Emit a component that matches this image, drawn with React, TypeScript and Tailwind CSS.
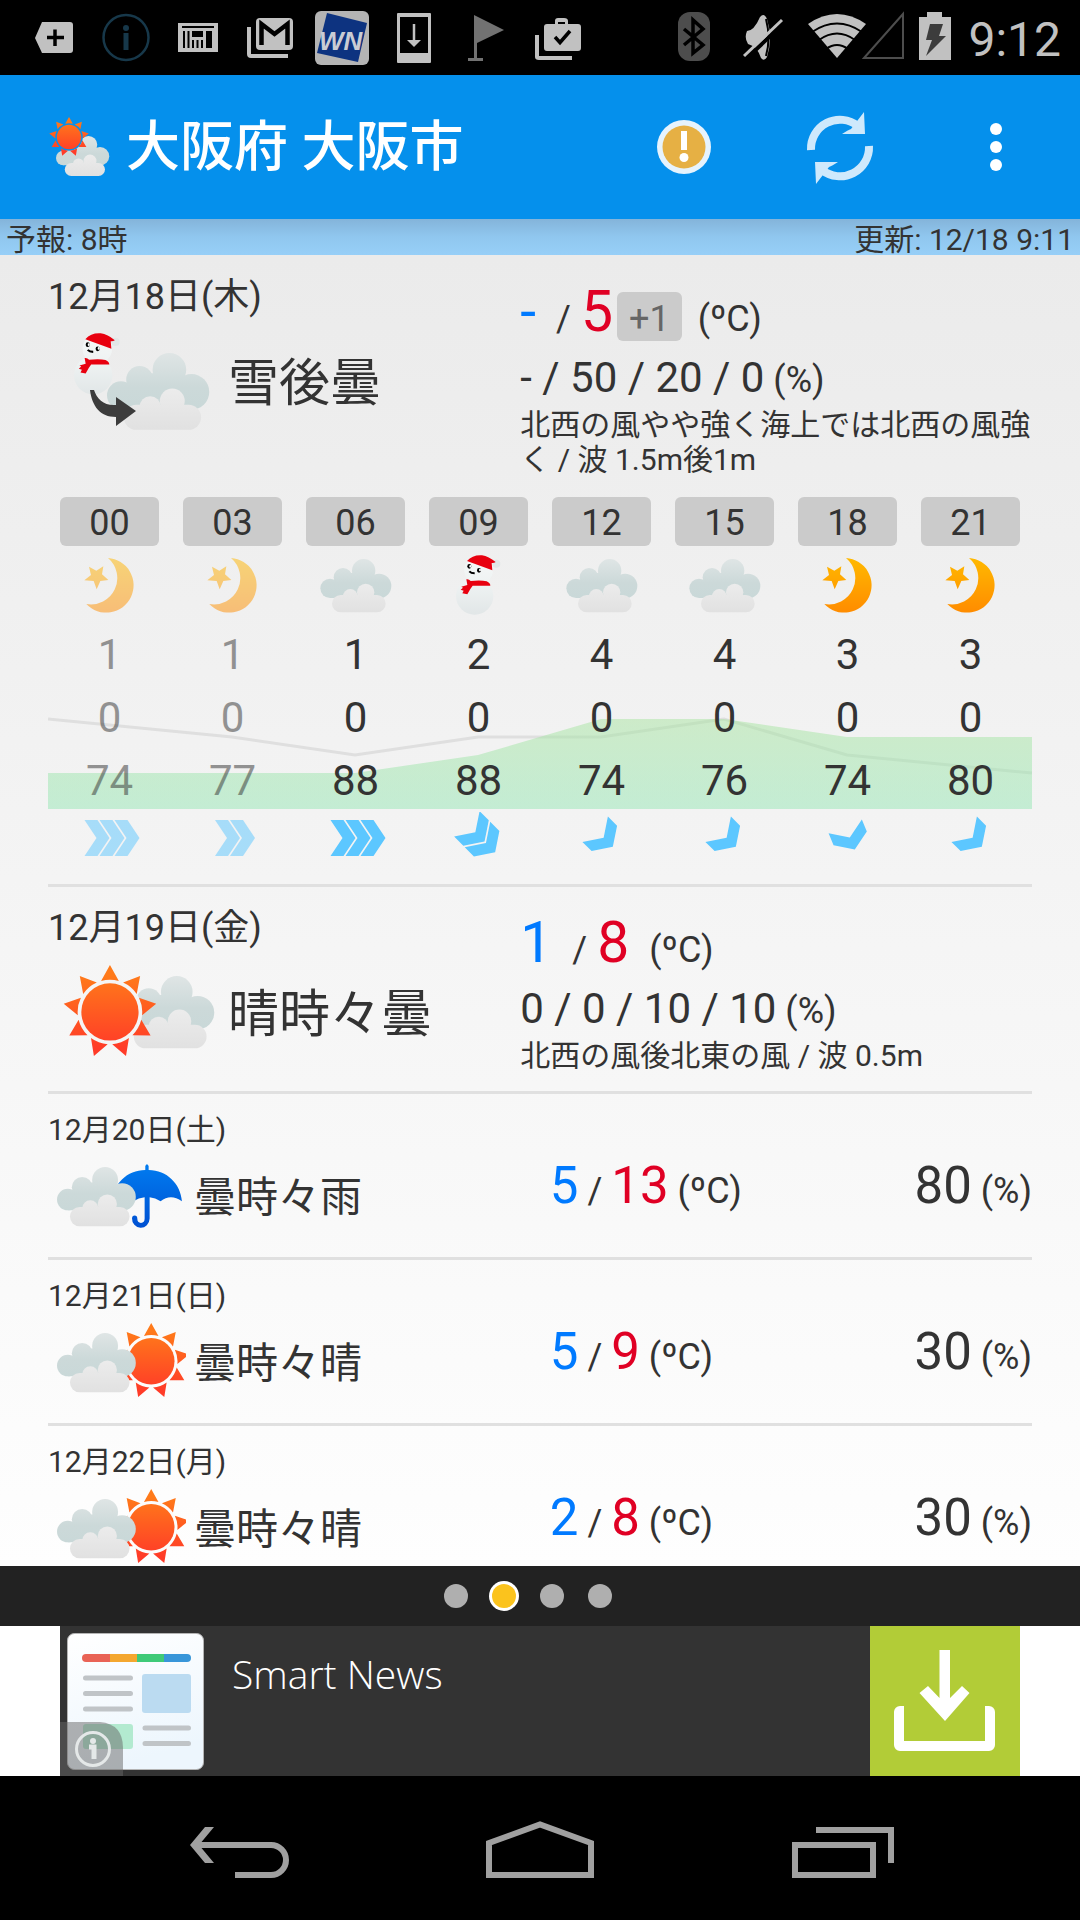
import type { ReactNode } from "react";

/* ---------- weather glyphs ---------- */

const CENTER = 141;
const point = (radius: number, degrees: number) => {
  const a = (degrees * Math.PI) / 180;
  return `${(CENTER + radius * Math.sin(a)).toFixed(1)} ${(CENTER - radius * Math.cos(a)).toFixed(1)}`;
};
const SUN_RAYS = Array.from({ length: 9 }, (_, i) => {
  const d = i * 40;
  return `M${point(141, d)}L${point(97, d + 16)}A96 96 0 0 0 ${point(97, d - 16)}Z`;
}).join("");

function Defs() {
  return (
    <svg className="absolute h-0 w-0" aria-hidden="true">
      <defs>
        <linearGradient id="sun" gradientUnits="userSpaceOnUse" x1="0" y1="30" x2="0" y2="250">
          <stop offset="0" stopColor="#ff7a1a" />
          <stop offset="1" stopColor="#ff3b28" />
        </linearGradient>
        <linearGradient id="cloudBack" gradientUnits="userSpaceOnUse" x1="0" y1="0" x2="0" y2="118">
          <stop offset="0" stopColor="#dfe5e5" />
          <stop offset="0.6" stopColor="#ccd9d9" />
          <stop offset="1" stopColor="#c9d8d8" />
        </linearGradient>
        <linearGradient id="cloudFront" gradientUnits="userSpaceOnUse" x1="0" y1="74" x2="0" y2="160">
          <stop offset="0" stopColor="#ececec" />
          <stop offset="1" stopColor="#e1e1e1" />
        </linearGradient>
        <linearGradient id="moon" gradientUnits="userSpaceOnUse" x1="0" y1="0" x2="0" y2="163">
          <stop offset="0" stopColor="#ffb900" />
          <stop offset="1" stopColor="#ff8c00" />
        </linearGradient>
        <linearGradient id="snow" gradientUnits="userSpaceOnUse" x1="0" y1="0" x2="0" y2="180">
          <stop offset="0" stopColor="#f6f8f8" />
          <stop offset="0.5" stopColor="#eef2f2" />
          <stop offset="1" stopColor="#e1e6e7" />
        </linearGradient>
        <linearGradient id="umbrella" gradientUnits="userSpaceOnUse" x1="0" y1="0" x2="0" y2="193">
          <stop offset="0" stopColor="#007cf0" />
          <stop offset="1" stopColor="#0050d2" />
        </linearGradient>
      </defs>
    </svg>
  );
}

/* 282 x 282 */
function SunShape({ halo }: { halo: string }) {
  return (
    <>
      <circle cx="141" cy="141" r="97" fill={halo} />
      <circle cx="141" cy="141" r="86" fill="url(#sun)" />
      <path d={SUN_RAYS} fill="url(#sun)" />
    </>
  );
}

/* 213 x 160 */
function CloudShape() {
  return (
    <>
      <g fill="url(#cloudBack)">
        <circle cx="29" cy="88" r="29" />
        <circle cx="68" cy="55" r="28" />
        <circle cx="130" cy="35" r="35" />
        <circle cx="176" cy="81" r="37" />
        <path d="M42 62H90V42H150V62H180V117H29V70Z" />
      </g>
      <g fill="url(#cloudFront)">
        <rect x="35" y="108" width="161" height="52" rx="26" />
        <circle cx="90" cy="112" r="22" />
        <circle cx="136" cy="100" r="26" />
        <path d="M60 112H170V130H60Z" />
      </g>
    </>
  );
}

/* 133 x 180 */
function SnowmanShape() {
  return (
    <>
      <g fill="url(#snow)">
        <circle cx="56" cy="123" r="56" />
        <circle cx="68" cy="46" r="43" />
      </g>
      <circle cx="121" cy="26" r="12" fill="#e2e7e7" />
      <path d="M33 18Q50-1 78 1Q98 4 119 21Q114 25 107 24L109 46Z" fill="#e8000f" />
      <path
        d="M31 73Q38 71 44 78Q74 74 92 79Q103 84 103 92L50 92L43 102L34 118L19 115L23 107L14 104L21 98L16 95L34 90Z"
        fill="#e8000f"
      />
      <ellipse cx="40" cy="34" rx="6" ry="7" fill="#000" />
      <ellipse cx="69" cy="46" rx="6" ry="7" fill="#000" />
      <ellipse cx="43" cy="34" rx="3" ry="4" fill="#fff" />
      <ellipse cx="72" cy="45" rx="3" ry="4" fill="#fff" />
      <path d="M40 49Q45 55 56 55" fill="none" stroke="#000" strokeWidth="6" />
    </>
  );
}

/* 154 x 163 */
function MoonShape() {
  return (
    <g fill="url(#moon)">
      <path d="M71 0A82 82 0 1 1 6 138A79 79 0 0 0 71 0Z" />
      <path d="M14 26L36 38L57 25L53 49L72 66L48 69L37 94L28 69L0 67L20 51Z" />
    </g>
  );
}

/* 210 x 193 */
function UmbrellaShape() {
  return (
    <g fill="url(#umbrella)">
      <path d="M100 18V6Q105-5 110 6V18C165 18 206 60 210 112Q176 88 146 112Q130 102 113 100V164A26 28 0 0 1 60 162Q61 155 68 155Q76 155 76 164A10 12 0 0 0 98 164V100Q80 102 64 112Q34 88 0 112C4 60 45 18 100 18Z" />
    </g>
  );
}

type IconName = "moon" | "cloud" | "snowman";

function HourIcon({ name }: { name: IconName }) {
  return (
    <svg viewBox="0 0 240 180" className="mx-auto h-[60px] w-20" role="img" aria-label={name}>
      {name === "moon" && (
        <g transform="translate(43 9)">
          <MoonShape />
        </g>
      )}
      {name === "cloud" && (
        <g transform="translate(13 12)">
          <CloudShape />
        </g>
      )}
      {name === "snowman" && (
        <g transform="translate(51 0)">
          <SnowmanShape />
        </g>
      )}
    </svg>
  );
}

function SnowThenCloud() {
  return (
    <svg viewBox="0 0 156 108" className="h-[108px] w-[156px]" aria-hidden="true">
      <g transform="translate(14 5) scale(.343)">
        <SnowmanShape />
      </g>
      <g transform="translate(47 25) scale(.48)">
        <CloudShape />
      </g>
      <path d="M30 62H34C37 71 44 78 56 77V69L76 83L56 98V89C40 89 32 78 30 62Z" fill="#3c3c3c" />
    </svg>
  );
}

function SunWithCloud() {
  return (
    <svg viewBox="0 0 156 108" className="h-[108px] w-[156px]" aria-hidden="true">
      <g transform="translate(58 17) scale(.452)">
        <CloudShape />
      </g>
      <g transform="translate(3 6) scale(.333)">
        <SunShape halo="#f5f5f5" />
      </g>
    </svg>
  );
}

function CloudWith({ other }: { other: "sun" | "umbrella" }) {
  return (
    <svg viewBox="0 0 132 84" className="h-[84px] w-[132px]" aria-hidden="true">
      {other === "sun" ? (
        <g transform="translate(59 3) scale(.271)">
          <SunShape halo="#fcfcfc" />
        </g>
      ) : (
        <g transform="translate(58 10) scale(.333)">
          <UmbrellaShape />
        </g>
      )}
      <g transform="translate(3 13) scale(.37)">
        <CloudShape />
      </g>
    </svg>
  );
}

function Wind({ count, angle = 0 }: { count: number; angle?: number }) {
  const width = 25 + (count - 1) * 15;
  return (
    <svg viewBox="-36 -26 72 52" className="mx-auto h-[52px] w-[76px]" role="img" aria-label="wind">
      <g transform={`translate(2 0) rotate(${angle})`} fill="#5cc7ff">
        {Array.from({ length: count }, (_, i) => (
          <path key={i} transform={`translate(${i * 15 - width / 2} -18)`} d="M0 0H13L25 18L13 36H0L12 18Z" />
        ))}
      </g>
    </svg>
  );
}

/* ---------- system bars ---------- */

function Notice({ children }: { children: ReactNode }) {
  return (
    <svg viewBox="0 0 72 75" className="h-[75px] w-[72px]" aria-hidden="true">
      {children}
    </svg>
  );
}

function StatusBar() {
  return (
    <div className="flex h-[75px] shrink-0 items-center bg-black pr-[19px] pl-[18px]">
      <Notice>
        <path d="M24 22H52Q55 22 55 25V50Q55 53 52 53H24L17 38Z" fill="#c1c1c1" />
        <path d="M37 29.500V46M29 37.500H46" stroke="#000" strokeWidth="3.500" />
      </Notice>
      <Notice>
        <circle cx="36" cy="37.500" r="22.500" fill="none" stroke="#17384a" strokeWidth="2.500" />
        <circle cx="36" cy="28" r="3" fill="#17384a" />
        <path d="M36 33V50" stroke="#17384a" strokeWidth="5" />
      </Notice>
      <Notice>
        <rect x="16" y="23" width="40" height="29" fill="#c1c1c1" />
        <path d="M20 27H52M22 31V48M26.500 31V48M31 40V48M35.500 40V48M40 40V48" stroke="#000" strokeWidth="2" />
        <path d="M30 31H41V37H30ZM44 31H50V48H44Z" fill="#000" />
      </Notice>
      <Notice>
        <path d="M15 27V54Q15 56 17 56H54" fill="none" stroke="#c1c1c1" strokeWidth="4" />
        <rect x="22" y="18" width="37" height="32" rx="4" fill="#c1c1c1" />
        <path d="M27.500 45V24L40.500 34L53.500 24V45" fill="none" stroke="#000" strokeWidth="4.500" />
      </Notice>
      <Notice>
        <rect x="9" y="11" width="54" height="54" rx="6" fill="#b4b4b4" />
        <path d="M21 13L61 23L52 62L11 53Z" fill="#0d3380" />
        <text x="13" y="50" fontFamily="Liberation Sans" fontSize="26" fontWeight="700" fontStyle="italic" fill="#c9ccd4">
          WN
        </text>
      </Notice>
      <Notice>
        <path fillRule="evenodd" d="M20 13H52Q53 13 53 14V62Q53 63 52 63H20Q19 63 19 62V14Q19 13 20 13ZM22 17V53H50V17Z" fill="#c1c1c1" />
        <path d="M36 24V42" stroke="#c1c1c1" strokeWidth="2.500" />
        <path d="M29 40H43L36 47Z" fill="#c1c1c1" />
      </Notice>
      <Notice>
        <path d="M24 15L54 30L27 43V58H33V61H18V58H24Z" fill="#727272" />
      </Notice>
      <Notice>
        <path d="M15 35V57Q15 58 17 58H50" fill="none" stroke="#c1c1c1" strokeWidth="4" />
        <path fillRule="evenodd" d="M33 24V21Q33 18 36 18H42Q46 18 46 21V24H56Q59 24 59 27V48Q59 51 56 51H25Q22 51 22 48V27Q22 24 25 24ZM36 24H43V22H36Z" fill="#c1c1c1" />
        <path d="M33 37L38 42.500L48 31" fill="none" stroke="#000" strokeWidth="3.500" />
      </Notice>

      <div className="ml-auto flex items-center">
        <Notice>
          <rect x="20" y="12" width="32" height="49" rx="12" fill="#4d4d4d" />
          <path d="M26 29L45 45L35 53V20L45 29L26 45" fill="none" stroke="#000" strokeWidth="3.500" />
        </Notice>
        <Notice>
          <path d="M17 31Q24 31 30 17Q34 12 37 19Q43 38 37 57Q34 62 31 58Q27 46 18 44Q14 38 17 31Z" fill="#c1c1c1" />
          <path d="M36 19Q41 38 36 56" fill="none" stroke="#000" strokeWidth="2" />
          <path d="M16 59L55 22" stroke="#000" strokeWidth="4" />
          <path d="M14 56L52 20" stroke="#c1c1c1" strokeWidth="3" />
        </Notice>
        <svg viewBox="0 0 106 75" className="h-[75px] w-[106px]" aria-hidden="true">
          <path d="M6 24Q35 4 64 24L35 58Z" fill="#c1c1c1" />
          <path d="M10 32Q35 15 60 32M17 40Q35 27 53 40M24 49Q35 41 46 49" fill="none" stroke="#000" strokeWidth="2" />
          <path d="M62 58L101 14V58Z" fill="none" stroke="#4d4d4d" strokeWidth="2" />
        </svg>
        <svg viewBox="0 0 54 75" className="h-[75px] w-[54px]" aria-hidden="true">
          <path d="M11 17H19V12H34V17H43V60H11Z" fill="#c1c1c1" />
          <path d="M22 24H35L31 36H38L18 56L24 40H18Z" fill="#3c3c3c" />
        </svg>
      </div>
      <time className="ml-1.5 pt-1 text-[48px] leading-none text-[#c1c1c1]">9:12</time>
    </div>
  );
}

function AppBar() {
  return (
    <header className="flex h-[144px] shrink-0 items-center bg-[#0590ec] pr-1.5 pl-12 text-white">
      <svg viewBox="0 0 64 64" className="h-16 w-16" aria-hidden="true">
        <g transform="translate(8 21) scale(.25)">
          <CloudShape />
        </g>
        <g transform="translate(1 2) scale(.142)">
          <SunShape halo="#0590ec" />
        </g>
      </svg>
      <h1 className="ml-3.5 pt-0.5 text-[54px] leading-none font-medium">大阪府 大阪市</h1>
      <div className="ml-auto flex">
        <button type="button" aria-label="警報" className="flex h-[144px] w-[156px] items-center justify-center">
          <svg viewBox="0 0 54 54" className="h-[54px] w-[54px]">
            <circle cx="27" cy="27" r="27" fill="#e6f3fd" />
            <circle cx="27" cy="27" r="21.500" fill="#e6b044" />
            <path d="M27 11V30" stroke="#fff" strokeWidth="6" />
            <circle cx="27" cy="37.500" r="4.500" fill="#fff" />
          </svg>
        </button>
        <button type="button" aria-label="更新" className="flex h-[144px] w-[156px] items-center justify-center pt-0.5">
          <svg viewBox="0 0 72 72" className="h-[72px] w-[72px]">
            {[0, 180].map((r) => (
              <g key={r} transform={`rotate(${r} 36 36)`}>
                <path d="M7 38A29 29 0 0 1 54 14" fill="none" stroke="#cfe9fc" strokeWidth="8" />
                <path d="M60 0L61 22H38Q44 18 47 17Z" fill="#cfe9fc" />
              </g>
            ))}
          </svg>
        </button>
        <button type="button" aria-label="メニュー" className="flex h-[144px] w-[156px] flex-col items-center justify-center gap-1.5">
          <span className="h-3 w-3 rounded-full bg-white" />
          <span className="h-3 w-3 rounded-full bg-white" />
          <span className="h-3 w-3 rounded-full bg-white" />
        </button>
      </div>
    </header>
  );
}

/* ---------- forecast ---------- */

type Hour = { time: string; icon: IconName; temp: number; rain: number; humidity: number; wind: number; angle: number; past?: boolean };

const HOURS: Hour[] = [
  { time: "00", icon: "moon", temp: 1, rain: 0, humidity: 74, wind: 3, angle: 0, past: true },
  { time: "03", icon: "moon", temp: 1, rain: 0, humidity: 77, wind: 2, angle: 0, past: true },
  { time: "06", icon: "cloud", temp: 1, rain: 0, humidity: 88, wind: 3, angle: 0 },
  { time: "09", icon: "snowman", temp: 2, rain: 0, humidity: 88, wind: 2, angle: 45 },
  { time: "12", icon: "cloud", temp: 4, rain: 0, humidity: 74, wind: 1, angle: 45 },
  { time: "15", icon: "cloud", temp: 4, rain: 0, humidity: 76, wind: 1, angle: 45 },
  { time: "18", icon: "moon", temp: 3, rain: 0, humidity: 74, wind: 1, angle: 67.5 },
  { time: "21", icon: "moon", temp: 3, rain: 0, humidity: 80, wind: 1, angle: 45 },
];

function HourlyTable() {
  const fade = (h: Hour) => (h.past ? "opacity-50" : "");
  return (
    <div className="relative mt-5 mb-0.5">
      <svg viewBox="0 0 984 96" preserveAspectRatio="none" className="absolute inset-x-0 bottom-[52px] h-24 w-full" aria-hidden="true">
        <defs>
          <linearGradient id="tempFill" x1="0" y1="0" x2="0" y2="1">
            <stop offset="0" stopColor="#a8e4a0" stopOpacity="0.5" />
            <stop offset="1" stopColor="#94e6b4" stopOpacity="0.5" />
          </linearGradient>
        </defs>
        <path d="M0 3L184 21L307 39L430 21H553L676 3L799 39L984 57" fill="none" stroke="#dfdfdf" strokeWidth="3" />
        <path d="M0 57H307L430 39L553 3H676L799 21H984V93H0Z" fill="url(#tempFill)" />
      </svg>
      <table className="relative w-full table-fixed border-collapse text-center text-[42px] leading-none">
        <thead>
          <tr className="h-[49px]">
            {HOURS.map((h) => (
              <th key={h.time} scope="col" className="px-3 py-0 text-[36px] font-normal">
                <span className="block rounded-md bg-[#cbcbcb] pt-1 leading-[45px]">{h.time}</span>
              </th>
            ))}
          </tr>
        </thead>
        <tbody>
          <tr className="h-[77px]">
            {HOURS.map((h) => (
              <td key={h.time} className={`p-0 ${fade(h)}`}>
                <HourIcon name={h.icon} />
              </td>
            ))}
          </tr>
          {(["temp", "rain", "humidity"] as const).map((key) => (
            <tr key={key} className="h-[63px]">
              {HOURS.map((h) => (
                <td key={h.time} className={`p-0 ${fade(h)}`}>
                  {h[key]}
                </td>
              ))}
            </tr>
          ))}
          <tr className="h-[52px]">
            {HOURS.map((h) => (
              <td key={h.time} className={`p-0 ${fade(h)}`}>
                <Wind count={h.wind} angle={h.angle} />
              </td>
            ))}
          </tr>
        </tbody>
      </table>
    </div>
  );
}

type DetailProps = {
  date: string;
  name: string;
  icon: ReactNode;
  low: string;
  high: string;
  diff?: string;
  rain: string;
  note: string;
  children?: ReactNode;
};

function DetailDay({ date, name, icon, low, high, diff, rain, note, children }: DetailProps) {
  return (
    <article className="border-b-[3px] border-[#e0e0e0] pb-[18px]">
      <div className="flex">
        <div className="w-[48%] pt-[21px]">
          <h2 className="text-[36px] leading-10">{date}</h2>
          <div className="mt-[11px] ml-3 flex items-center gap-3">
            {icon}
            <p className="pt-0.5 text-[51px] leading-none">{name}</p>
          </div>
        </div>
        <div className="w-[52%] pt-[26px]">
          <p className="flex h-[60px] items-baseline text-[36px] leading-none">
            <span className="text-[57px] leading-[60px] text-[#007aff]">{low}</span>
            <span className="mr-2.5 ml-5">/</span>
            <span className="text-[57px] leading-[60px] text-[#e00024]">{high}</span>
            {diff && <span className="ml-1 rounded-md bg-[#cbcbcb] px-3 pt-1.5 leading-[43px] text-[#666]">{diff}</span>}
            <span className={diff ? "ml-4" : "ml-5"}>(ºC)</span>
          </p>
          <p className="mt-[11px] text-[42px] leading-[50px]">
            {rain}
            <span className="text-[36px] leading-none"> (%)</span>
          </p>
          <p className="mt-1 text-[30px] leading-[35px]">{note}</p>
        </div>
      </div>
      {children}
    </article>
  );
}

type Week = { date: string; name: string; other: "sun" | "umbrella"; low: number; high: number; rain: number };

const WEEK: Week[] = [
  { date: "12月20日(土)", name: "曇時々雨", other: "umbrella", low: 5, high: 13, rain: 80 },
  { date: "12月21日(日)", name: "曇時々晴", other: "sun", low: 5, high: 9, rain: 30 },
  { date: "12月22日(月)", name: "曇時々晴", other: "sun", low: 2, high: 8, rain: 30 },
];

function WeekDay({ day }: { day: Week }) {
  return (
    <article className="flex h-[166px] border-b-[3px] border-[#e0e0e0]">
      <div className="w-[51%] pt-[18px]">
        <h2 className="text-[30px] leading-9">{day.date}</h2>
        <div className="mt-1.5 ml-1.5 flex items-center gap-2">
          <CloudWith other={day.other} />
          <p className="pt-1 text-[42px] leading-none">{day.name}</p>
        </div>
      </div>
      <div className="flex w-[49%] items-center justify-between pt-5 text-[51px] leading-[60px]">
        <p>
          <span className="text-[#007aff]">{day.low}</span>
          <span className="text-[36px] leading-none"> / </span>
          <span className="text-[#e00024]">{day.high}</span>
          <span className="text-[36px] leading-none"> (ºC)</span>
        </p>
        <p>
          {day.rain}
          <span className="text-[36px] leading-none"> (%)</span>
        </p>
      </div>
    </article>
  );
}

/* ---------- footer ---------- */

function Pager() {
  return (
    <nav aria-label="地点" className="flex h-[60px] shrink-0 items-center justify-center bg-[#222]">
      {[0, 1, 2, 3].map((i) => (
        <button
          key={i}
          type="button"
          aria-label={`ページ ${i + 1}`}
          className={i === 1 ? "mr-6 h-6 w-6 rounded-full bg-[#fbc31d] ring-[3px] ring-white" : "mr-6 h-6 w-6 rounded-full bg-[#afafaf]"}
        />
      ))}
    </nav>
  );
}

function Ad() {
  return (
    <aside className="h-[150px] shrink-0 bg-white px-[60px]">
      <a href="#smart-news" className="relative flex h-full bg-[#333]">
        <svg viewBox="0 0 137 137" className="mt-[7px] ml-[7px] h-[137px] w-[137px]" aria-hidden="true">
          <defs>
            <linearGradient id="paper" x1="0" y1="0" x2="0.3" y2="1">
              <stop offset="0" stopColor="#fff" />
              <stop offset="1" stopColor="#edf6fd" />
            </linearGradient>
            <clipPath id="stripe">
              <rect x="15" y="21" width="109" height="8" rx="4" />
            </clipPath>
          </defs>
          <rect x="0.500" y="0.500" width="136" height="136" rx="7" fill="url(#paper)" stroke="#b4b4b4" />
          <g clipPath="url(#stripe)">
            <path d="M15 21H43V29H15Z" fill="#e96356" />
            <path d="M43 21H70V29H43Z" fill="#f4a72f" />
            <path d="M70 21H97V29H70Z" fill="#3fca78" />
            <path d="M97 21H124V29H97Z" fill="#3896d9" />
          </g>
          <path
            d="M18.500 45H63.500M18.500 60.500H63.500M18.500 76H63.500M78 95H121.500M78 110.500H121.500"
            stroke="#c0c4c7"
            strokeWidth="5"
            strokeLinecap="round"
          />
          <rect x="75" y="41" width="49" height="39" rx="3" fill="#bbdbf1" />
          <rect x="16" y="91" width="50" height="25" rx="3" fill="#b3ead0" />
        </svg>
        <span className="mt-6 ml-7 grow font-['Open_Sans'] text-[39px] leading-[48px] font-light text-white">Smart News</span>
        <svg viewBox="0 0 150 150" className="h-[150px] w-[150px] bg-[#b2cc37]" aria-hidden="true">
          <path d="M69.500 24H80V72L92 60L99.500 67L75 95L49.500 67L58 60L69.500 72Z" fill="#fff" />
          <path d="M34 80H30A6 6 0 0 0 24 86V119A6 6 0 0 0 30 125H119A6 6 0 0 0 125 119V86A6 6 0 0 0 119 80H115V115H34Z" fill="#fff" />
        </svg>
        <svg viewBox="0 0 63 54" className="absolute bottom-0 left-0 h-[54px] w-[63px]" aria-hidden="true">
          <path d="M0 0H40Q63 2 63 26V54H0Z" fill="#666" fillOpacity="0.500" />
          <circle cx="33" cy="27" r="16.500" fill="none" stroke="#e4e8e8" strokeWidth="3" />
          <circle cx="33" cy="19" r="3" fill="#e4e8e8" />
          <path d="M29 25H34V37" fill="none" stroke="#e4e8e8" strokeWidth="5" />
        </svg>
      </a>
    </aside>
  );
}

function NavButton({ label, children }: { label: string; children: ReactNode }) {
  return (
    <button type="button" aria-label={label} className="flex h-full w-[300px] items-center justify-center">
      <svg viewBox="0 0 108 72" className="h-[72px] w-[108px]" fill="none" stroke="#a0a0a0" strokeWidth="6">
        {children}
      </svg>
    </button>
  );
}

function SystemNav() {
  return (
    <nav aria-label="システム" className="flex h-[144px] shrink-0 justify-center bg-black">
      <NavButton label="戻る">
        <path d="M10 33H85A15 15 0 0 1 85 63H49" />
        <path d="M19 15H28L13 33L28 51H19L4 33Z" fill="#a0a0a0" stroke="none" />
      </NavButton>
      <NavButton label="ホーム">
        <path d="M3 31L54 12.500L105 31V63H3Z" />
      </NavButton>
      <NavButton label="履歴">
        <path d="M9 33H87V63H9ZM30 18H105V51" />
      </NavButton>
    </nav>
  );
}

export default function App() {
  return (
    <div className="flex h-screen flex-col overflow-hidden font-[Roboto,'Noto_Sans_CJK_JP',sans-serif] text-[#333]">
      <Defs />
      <StatusBar />
      <AppBar />
      <div className="flex h-9 shrink-0 items-end justify-between bg-linear-to-b from-[#84b4da] via-[#90c7ef] to-[#97cff8] px-1.5 text-[30px] leading-[30px]">
        <span>予報: 8時</span>
        <span>更新: 12/18 9:11</span>
      </div>
      <main className="min-h-0 grow overflow-y-auto bg-linear-to-b from-[#ebebeb] to-[#fefefe] px-12 pt-px [scrollbar-width:none]">
        <DetailDay
          date="12月18日(木)"
          name="雪後曇"
          icon={<SnowThenCloud />}
          low="-"
          high="5"
          diff="+1"
          rain="- / 50 / 20 / 0"
          note="北西の風やや強く海上では北西の風強く / 波 1.5m後1m"
        >
          <HourlyTable />
        </DetailDay>
        <DetailDay
          date="12月19日(金)"
          name="晴時々曇"
          icon={<SunWithCloud />}
          low="1"
          high="8"
          rain="0 / 0 / 10 / 10"
          note="北西の風後北東の風 / 波 0.5m"
        />
        {WEEK.map((day) => (
          <WeekDay key={day.date} day={day} />
        ))}
      </main>
      <Pager />
      <Ad />
      <SystemNav />
    </div>
  );
}
